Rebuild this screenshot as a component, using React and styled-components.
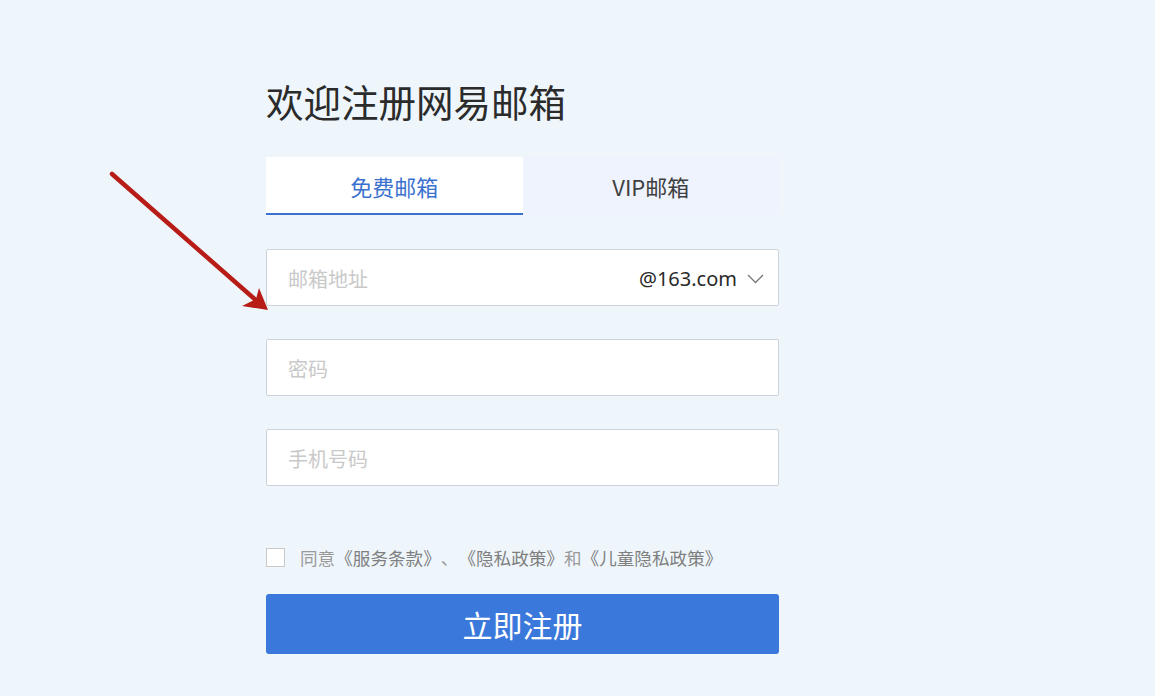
import React from "react";
import styled, { createGlobalStyle } from "styled-components";

const Global = createGlobalStyle`
  html, body { margin: 0; padding: 0; }
  body {
    background: #eef6fc;
    font-family: "Microsoft YaHei", "Noto Sans", "Noto Sans CJK SC", sans-serif;
    width: 1155px;
    height: 696px;
    overflow: hidden;
  }
`;

const Page = styled.div`
  position: relative;
  width: 1155px;
  height: 696px;
  box-sizing: border-box;
  padding: 76px 0 0 266px;
`;

const Form = styled.div`
  width: 513px;
  display: flex;
  flex-direction: column;
`;

const Title = styled.h1`
  margin: 0;
  font-size: 37.5px;
  line-height: 50px;
  font-weight: 400;
  color: #2b2b2b;
  font-family: "Noto Sans CJK SC", sans-serif;
`;

const Tabs = styled.div`
  display: flex;
  margin-top: 31px;
  height: 58px;
`;

const Tab = styled.div`
  flex: 1;
  display: flex;
  align-items: center;
  justify-content: center;
  box-sizing: border-box;
  font-size: 22px;
  font-family: "Noto Sans CJK SC", sans-serif;
  background: ${(p) => (p.$active ? "#ffffff" : "#eef3fd")};
  color: ${(p) => (p.$active ? "#3c72cf" : "#404040")};
  border-bottom: 2px solid ${(p) => (p.$active ? "#3c72cf" : "transparent")};
  padding-top: 2px;
`;

const Fields = styled.div`
  display: flex;
  flex-direction: column;
  gap: 33px;
  margin-top: 34px;
`;

const Field = styled.div`
  height: 57px;
  box-sizing: border-box;
  background: #fff;
  border: 1px solid #ccd3dc;
  border-radius: 2px;
  display: flex;
  align-items: center;
  padding: 2px 14px 0 21px;
`;

const Placeholder = styled.span`
  flex: 1;
  font-size: 20px;
  color: #c9c9c9;
  font-family: "Noto Sans CJK SC", sans-serif;
`;

const Domain = styled.span`
  font-size: 20px;
  color: #2a2a2a;
  font-family: "Noto Sans", "Noto Sans CJK SC", sans-serif;
  margin-right: 10px;
`;

const Agree = styled.div`
  display: flex;
  align-items: center;
  margin-top: 59px;
  gap: 15px;
`;

const Box = styled.span`
  width: 19px;
  height: 19px;
  box-sizing: border-box;
  border: 1px solid #c9c9c9;
  background: #fff;
`;

const AgreeText = styled.span`
  font-size: 17.6px;
  color: #9a9a9a;
  font-family: "Noto Sans CJK SC", sans-serif;
  text-spacing-trim: space-all;
  font-feature-settings: "halt" 0, "chws" 0;
`;

const Link = styled.span`
  color: #7f7f7f;
`;

const Submit = styled.button`
  margin-top: 24px;
  height: 60px;
  border: none;
  border-radius: 3px;
  background: #3b78db;
  color: #fff;
  font-size: 30px;
  font-family: "Noto Sans CJK SC", sans-serif;
  cursor: pointer;
  padding: 0;
`;

const Arrow = styled.svg`
  position: absolute;
  left: 0;
  top: 0;
  pointer-events: none;
`;

export default function App() {
  return (
    <Page>
      <Global />
      <Form>
        <Title>欢迎注册网易邮箱</Title>
        <Tabs>
          <Tab $active>免费邮箱</Tab>
          <Tab>VIP邮箱</Tab>
        </Tabs>
        <Fields>
          <Field>
            <Placeholder>邮箱地址</Placeholder>
            <Domain>@163.com</Domain>
            <svg width="17" height="10" viewBox="0 0 17 10">
              <path d="M1 1 L8.5 8.5 L16 1" fill="none" stroke="#777" strokeWidth="1.3" />
            </svg>
          </Field>
          <Field>
            <Placeholder>密码</Placeholder>
          </Field>
          <Field>
            <Placeholder>手机号码</Placeholder>
          </Field>
        </Fields>
        <Agree>
          <Box />
          <AgreeText>
            同意<Link>《服务条款》</Link>、<Link>《隐私政策》</Link>和<Link>《儿童隐私政策》</Link>
          </AgreeText>
        </Agree>
        <Submit>立即注册</Submit>
      </Form>
      <Arrow width="1155" height="696" viewBox="0 0 1155 696">
        <line x1="112" y1="174" x2="258" y2="302" stroke="#b71c16" strokeWidth="4.5" strokeLinecap="round" />
        <path d="M268 310 L259 288 L256 299 L242 306 Z" fill="#b71c16" />
      </Arrow>
    </Page>
  );
}
